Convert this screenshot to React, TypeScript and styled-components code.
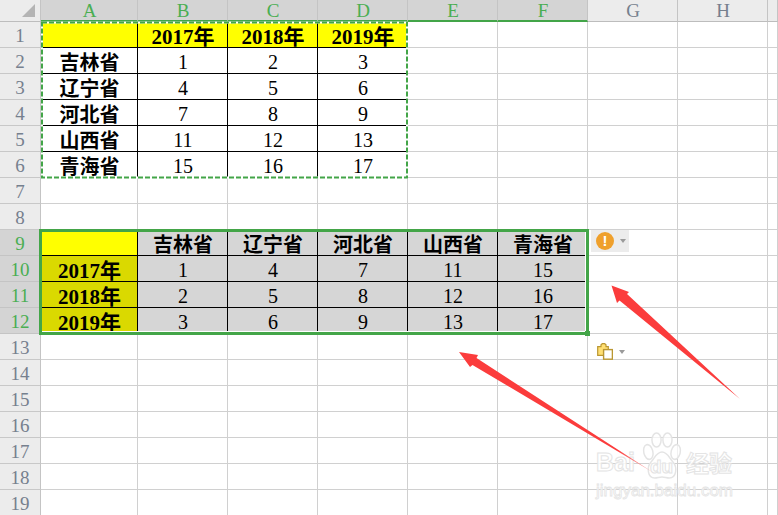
import React from "react";
import styled, { createGlobalStyle } from "styled-components";

const Global = createGlobalStyle`
  html, body { margin: 0; padding: 0; background: #fff; overflow: hidden; }
  #root { width: 778px; height: 515px; overflow: hidden; }
`;

const Sheet = styled.div`
  position: relative;
  width: 778px;
  height: 515px;
  overflow: hidden;
  display: grid;
  grid-template-columns: 41px 97px repeat(7, 90px) 10px;
  grid-template-rows: 22px repeat(19, 26px);
  font-family: "Liberation Serif", "Noto Sans CJK SC", serif;
  color: #000;
`;

const Corner = styled.div`
  background: #ececec;
  border-right: 1px solid #c4c4c4;
  border-bottom: 1px solid #bdbdbd;
  box-sizing: border-box;
  display: flex;
  align-items: flex-end;
  justify-content: flex-end;
  padding: 0 5px 4px 0;
`;

const Triangle = styled.div`
  width: 13px;
  height: 13px;
  background: #b4b4b4;
  clip-path: polygon(100% 0, 100% 100%, 0 100%);
`;

const ColHead = styled.div<{ $on?: boolean }>`
  box-sizing: border-box;
  display: flex;
  align-items: center;
  justify-content: center;
  font-size: 19px;
  padding: 1px 0 0 1px;
  background: ${(p) => (p.$on ? "#d4d4d4" : "#ececec")};
  color: ${(p) => (p.$on ? "#4aae52" : "#76808e")};
  border-right: 1px solid #c4c4c4;
  border-bottom: ${(p) => (p.$on ? "2px solid #43a548" : "1px solid #bdbdbd")};
`;

const RowHead = styled.div<{ $on?: boolean }>`
  box-sizing: border-box;
  display: flex;
  align-items: center;
  justify-content: center;
  font-size: 19px;
  padding-top: 3px;
  background: ${(p) => (p.$on ? "#d4d4d4" : "#ececec")};
  color: ${(p) => (p.$on ? "#4aae52" : "#76808e")};
  border-right: 1px solid #c4c4c4;
  border-bottom: 1px solid ${(p) => (p.$on ? "#c4c4c4" : "#c8c8c8")};
`;

const Cell = styled.div<{ $bg?: string; $line?: string; $bold?: boolean; $cjk?: boolean; $year?: boolean }>`
  box-sizing: border-box;
  display: flex;
  align-items: center;
  justify-content: center;
  white-space: nowrap;
  padding: ${(p) => (p.$cjk ? "1px" : "3px")} 0 0 1px;
  font-size: ${(p) => (p.$year ? "21px" : "20px")};
  font-weight: ${(p) => (p.$bold ? 700 : 400)};
  background: ${(p) => p.$bg ?? "#fff"};
  border-right: 1px solid ${(p) => p.$line ?? "#d0d0d0"};
  border-bottom: 1px solid ${(p) => p.$line ?? "#d0d0d0"};
`;

const Overlay = styled.svg`
  position: absolute;
  left: 0;
  top: 0;
  pointer-events: none;
`;

const Selection = styled.div`
  position: absolute;
  left: 39px;
  top: 229px;
  width: 550px;
  height: 106px;
  box-sizing: border-box;
  border: 3px solid #43a548;
  box-shadow: inset -1px -1px 0 #fff;
`;

const FillHandle = styled.div`
  position: absolute;
  left: 585px;
  top: 331px;
  width: 5px;
  height: 5px;
  background: #43a548;
`;

const WarnButton = styled.div`
  position: absolute;
  left: 591px;
  top: 230px;
  width: 38px;
  height: 22px;
  background: #ececec;
  display: flex;
  align-items: center;
  padding-left: 5px;
  gap: 6px;
  box-sizing: border-box;
`;

const WarnDot = styled.div`
  width: 18px;
  height: 18px;
  border-radius: 50%;
  background: #efa02c;
  color: #fff;
  font: 700 15px/18px "Liberation Sans", sans-serif;
  text-align: center;
`;

const Caret = styled.div`
  width: 0;
  height: 0;
  border-left: 3.5px solid transparent;
  border-right: 3.5px solid transparent;
  border-top: 4px solid #9a9a9a;
`;

const PasteButton = styled.div`
  position: absolute;
  left: 597px;
  top: 343px;
  display: flex;
  align-items: center;
  gap: 6px;
`;

const Watermark = styled.div`
  position: absolute;
  left: 596px;
  top: 432px;
  display: flex;
  flex-direction: column;
  pointer-events: none;
`;

const WmRow = styled.div`
  display: flex;
  align-items: flex-end;
  height: 50px;
`;

const WmWord = styled.span<{ $size: number; $drop: number }>`
  font-family: "Liberation Sans", "Noto Sans CJK SC", sans-serif;
  font-size: ${(p) => p.$size}px;
  line-height: 1;
  font-weight: 700;
  white-space: nowrap;
  padding-bottom: ${(p) => p.$drop}px;
  color: rgba(255, 255, 255, 0.85);
  -webkit-text-stroke: 1px #e4e4e4;
`;

const Paw = styled.div`
  position: relative;
  width: 42px;
  height: 50px;
  margin: 0 3px 0 6px;
  flex: none;
`;

const PawText = styled.span`
  position: absolute;
  left: 9px;
  top: 25px;
  font-family: "Liberation Sans", sans-serif;
  font-size: 19px;
  line-height: 1;
  font-weight: 700;
  color: rgba(255, 255, 255, 0.85);
  -webkit-text-stroke: 1px #e4e4e4;
`;

const WmUrl = styled.span`
  font-family: "Liberation Sans", sans-serif;
  font-size: 17px;
  line-height: 18px;
  font-weight: 400;
  white-space: nowrap;
  color: rgba(255, 255, 255, 0.85);
  -webkit-text-stroke: 0.8px #e4e4e4;
`;

const cols = ["A", "B", "C", "D", "E", "F", "G", "H", ""];
const years = ["2017年", "2018年", "2019年"];
const provinces = ["吉林省", "辽宁省", "河北省", "山西省", "青海省"];
const t1 = [[1, 2, 3], [4, 5, 6], [7, 8, 9], [11, 12, 13], [15, 16, 17]];
const t2 = [[1, 4, 7, 11, 15], [2, 5, 8, 12, 16], [3, 6, 9, 13, 17]];

function cellFor(row: number, col: number) {
  const k = `${row}-${col}`;
  if (row >= 1 && row <= 6 && col <= 3) {
    if (row === 1) {
      return <Cell key={k} $bg="#ffff00" $line="#000" $bold $cjk $year>{col > 0 ? years[col - 1] : ""}</Cell>;
    }
    if (col === 0) return <Cell key={k} $line="#000" $bold $cjk>{provinces[row - 2]}</Cell>;
    return <Cell key={k} $line="#000">{t1[row - 2][col - 1]}</Cell>;
  }
  if (row >= 9 && row <= 12 && col <= 5) {
    if (row === 9) {
      if (col === 0) return <Cell key={k} $bg="#ffff00" $line="#000" />;
      return <Cell key={k} $bg="#d6d6d6" $line="#000" $bold $cjk>{provinces[col - 1]}</Cell>;
    }
    if (col === 0) return <Cell key={k} $bg="#dad900" $line="#000" $bold $cjk $year>{years[row - 10]}</Cell>;
    return <Cell key={k} $bg="#d6d6d6" $line="#000">{t2[row - 10][col - 1]}</Cell>;
  }
  return <Cell key={k} />;
}

export default function App() {
  const rows = Array.from({ length: 19 }, (_, i) => i + 1);
  return (
    <>
      <Global />
      <Sheet>
        <Corner><Triangle /></Corner>
        {cols.map((c, i) => (
          <ColHead key={i} $on={i <= 5}>{c}</ColHead>
        ))}
        {rows.map((r) => (
          <React.Fragment key={r}>
            <RowHead $on={r >= 9 && r <= 12}>{r}</RowHead>
            {cols.map((_, c) => cellFor(r, c))}
          </React.Fragment>
        ))}

        <Overlay width="778" height="515" viewBox="0 0 778 515">
          <rect x="42" y="22.5" width="365" height="155" fill="none" stroke="#fff" strokeWidth="2" />
          <rect x="42" y="22.5" width="365" height="155" fill="none" stroke="#43a548" strokeWidth="2" strokeDasharray="5 2" />
        </Overlay>

        <Selection />
        <FillHandle />

        <WarnButton>
          <WarnDot>!</WarnDot>
          <Caret />
        </WarnButton>

        <PasteButton>
          <svg width="16" height="17" viewBox="0 0 16 17">
            <path d="M0.7 3.7h3.3V1.7l1.3-1h2.4l1.3 1v2h2.3v8.6H0.7z" fill="#ffdf73" stroke="#ba9732" strokeWidth="1.2" />
            <rect x="6.6" y="6.6" width="8.8" height="9.6" fill="#fff" stroke="#ba9732" strokeWidth="1.4" />
          </svg>
          <Caret />
        </PasteButton>

        <Watermark>
          <WmRow>
            <WmWord $size={25} $drop={7}>Bai</WmWord>
            <Paw>
              <svg width="42" height="50" viewBox="0 0 46 50" preserveAspectRatio="none">
                <g fill="rgba(255,255,255,.7)" stroke="#e4e4e4" strokeWidth="1.6">
                  <ellipse cx="8" cy="20" rx="5" ry="7.5" transform="rotate(-15 8 20)" />
                  <ellipse cx="17" cy="8" rx="5" ry="7" />
                  <ellipse cx="29" cy="8" rx="5" ry="7" />
                  <ellipse cx="38" cy="20" rx="5" ry="7.5" transform="rotate(15 38 20)" />
                  <path d="M23 20c6 0 8 6 12 10 5 5 4 16-4 16-3 0-5-1-8-1s-5 1-8 1c-8 0-9-11-4-16 4-4 6-10 12-10z" />
                </g>
              </svg>
              <PawText>du</PawText>
            </Paw>
            <WmWord $size={23} $drop={6}>经验</WmWord>
          </WmRow>
          <WmUrl>jingyan.baidu.com</WmUrl>
        </Watermark>

        <Overlay width="778" height="515" viewBox="0 0 778 515">
          <defs>
            <linearGradient id="tailFade" gradientUnits="userSpaceOnUse" x1="620" y1="445" x2="653" y2="472">
              <stop offset="0" stopColor="#fb3c3c" />
              <stop offset="1" stopColor="#fbbcbc" />
            </linearGradient>
          </defs>
          <polygon points="611.5,285.5 629,292 627,294 740,399 619.5,300.5 617,303" fill="#fb3c3c" />
          <polygon points="459,352 478,355 476.5,358 654,473 472.5,365 470,367" fill="url(#tailFade)" />
        </Overlay>
      </Sheet>
    </>
  );
}
